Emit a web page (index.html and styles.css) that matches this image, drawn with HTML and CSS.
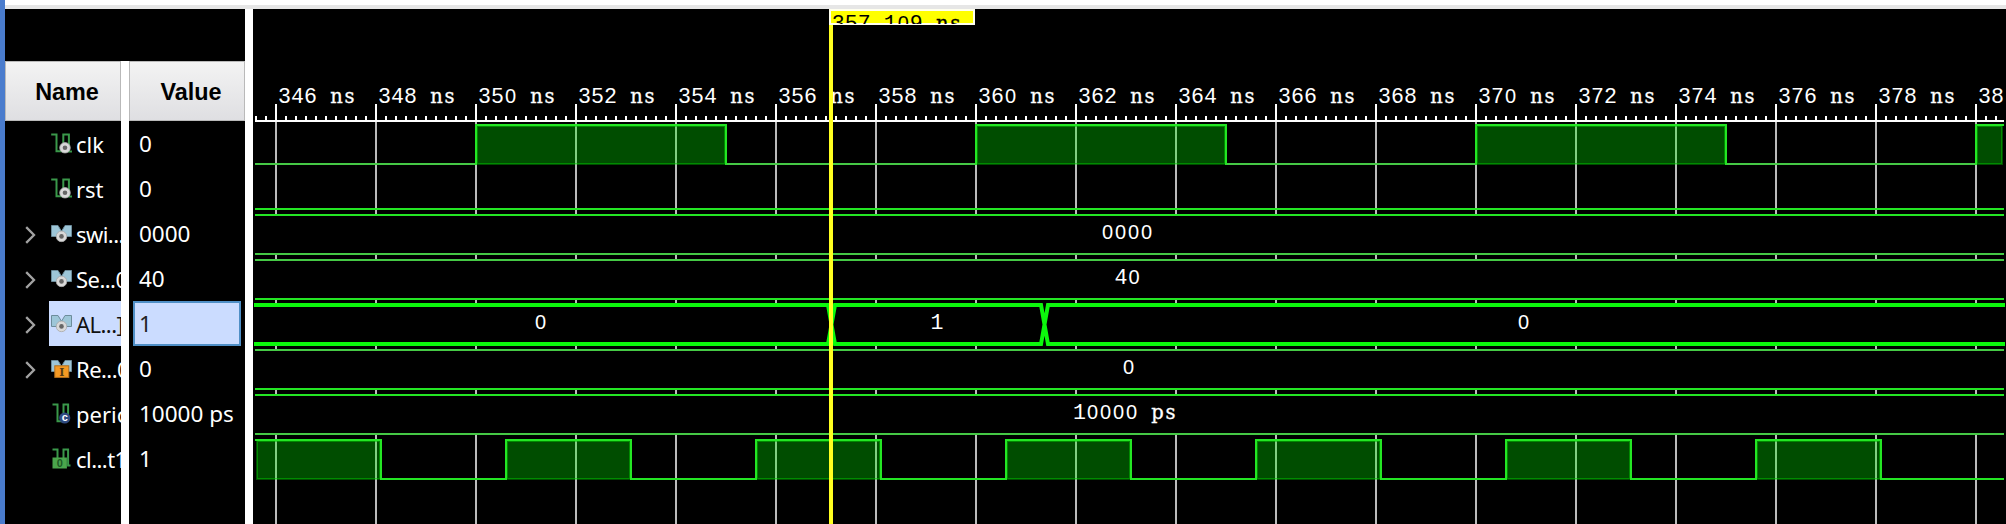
FILE: index.html
```html
<!DOCTYPE html>
<html lang="en">
<head>
<meta charset="utf-8">
<title>Waveform</title>
<link rel="stylesheet" href="styles.css">
</head>
<body>
<svg class="defs" aria-hidden="true">
  <symbol id="chevron" viewBox="0 0 12 20"><path d="M1.2 2.1L9 10 1.2 17.9" fill="none" stroke="#a2a2a2" stroke-width="2.3"/></symbol>
  <symbol id="scalar" viewBox="0 0 22 24">
    <path d="M1.2 1.5h5.3v16.8h6.8V1.5h5.6v17H22" fill="none" stroke="#3a984a" stroke-width="2"/>
  </symbol>
  <symbol id="probe" viewBox="0 0 12 12">
    <circle cx="6" cy="6" r="5.3" fill="#d9d9d9" stroke="#a8a8a8" stroke-width=".8"/><circle cx="6" cy="6" r="2.3" fill="#666"/>
  </symbol>
  <symbol id="bus" viewBox="0 0 22 24">
    <path d="M1.5 2.5H8l3.5 5.8L15 2.5h6.5v11h-20z" fill="#9dc6d8" stroke="#6d8c9b"/>
  </symbol>
</svg>
<div class="app">
  <div class="edge"></div>
  <div class="main">
    <div class="topbar"></div>
    <div class="panes">
      <div class="signals">
        <div class="blank"></div>
        <div class="columns">
          <div class="col">
            <div class="head">Name</div>
            <div class="row"><span class="tw"></span><div class="cell"><svg class="ico" viewBox="0 0 22 24"><use href="#scalar" width="22" height="24"/><use href="#probe" x="9" y="8.8" width="12" height="12"/></svg><span>clk</span></div></div>
            <div class="row"><span class="tw"></span><div class="cell"><svg class="ico" viewBox="0 0 22 24"><use href="#scalar" width="22" height="24"/><use href="#probe" x="9" y="8.8" width="12" height="12"/></svg><span>rst</span></div></div>
            <div class="row"><svg class="tw"><use href="#chevron" width="12" height="20"/></svg><div class="cell"><svg class="ico" viewBox="0 0 22 24"><use href="#bus" width="22" height="24"/><use href="#probe" x="5.5" y="7.4" width="12" height="12"/></svg><span class="short">swi...</span></div></div>
            <div class="row"><svg class="tw"><use href="#chevron" width="12" height="20"/></svg><div class="cell"><svg class="ico" viewBox="0 0 22 24"><use href="#bus" width="22" height="24"/><use href="#probe" x="5.5" y="7.4" width="12" height="12"/></svg><span class="short">Se...0</span></div></div>
            <div class="row"><svg class="tw"><use href="#chevron" width="12" height="20"/></svg><div class="cell selected"><svg class="ico" viewBox="0 0 22 24"><use href="#bus" width="22" height="24"/><use href="#probe" x="5.5" y="7.4" width="12" height="12"/></svg><span class="short">AL...]</span></div></div>
            <div class="row"><svg class="tw"><use href="#chevron" width="12" height="20"/></svg><div class="cell"><svg class="ico" viewBox="0 0 22 24"><use href="#bus" width="22" height="24"/><rect x="4.8" y="7.8" width="14" height="11.6" fill="#f59a23" stroke="#b36f1c"/><text class="glyph slab" x="11.8" y="17.6">I</text></svg><span class="short">Re...0</span></div></div>
            <div class="row"><span class="tw"></span><div class="cell"><svg class="ico" viewBox="0 0 22 24"><path d="M2.5 1.5h5v16.8h6V1.5h4.6v17" fill="none" stroke="#3a984a" stroke-width="2"/><circle cx="14.7" cy="15" r="5.6" fill="#2f4a80"/><text class="glyph light" x="14.7" y="18">c</text></svg><span>perio</span></div></div>
            <div class="row"><span class="tw"></span><div class="cell"><svg class="ico" viewBox="0 0 22 24"><path d="M2.5 1.5h5v16.8h6V1.5h4.6v16h2.4" fill="none" stroke="#3a984a" stroke-width="2"/><rect x="2.5" y="9.5" width="14.4" height="11" fill="#4aa64c"/><text class="glyph dark" x="9.7" y="18.8">0</text></svg><span class="short">cl...t1</span></div></div>
          </div>
          <div class="col">
            <div class="head">Value</div>
            <div class="row val">0</div>
            <div class="row val">0</div>
            <div class="row val">0000</div>
            <div class="row val">40</div>
            <div class="row val picked">1</div>
            <div class="row val">0</div>
            <div class="row val">10000 ps</div>
            <div class="row val">1</div>
          </div>
        </div>
      </div>
      <svg class="wave" id="wave" viewBox="253 9 1753 515" width="1753" height="515"></svg>
    </div>
  </div>
</div>
<script src="wave.js"></script>
</body>
</html>
```
FILE: styles.css
```css
* { box-sizing: border-box; }
body { margin: 0; background: #fff; overflow: hidden; font-family: "Noto Sans", "Open Sans", sans-serif; font-size: 22px; color: #fff; }
.defs { display: none; }
.app { display: flex; width: 2006px; height: 524px; }
.edge { flex: 0 0 5px; background: #4a7ccd; }
.main { flex: 1; min-width: 0; display: flex; flex-direction: column; }
.topbar { flex: 0 0 9px; border-bottom: 4px solid #e6e6e6; background: #fff; }
.panes { flex: 1; min-height: 0; display: flex; gap: 8px; }
.signals { flex: 0 0 240px; display: flex; flex-direction: column; }
.blank { flex: 0 0 52px; background: #000; }
.columns { flex: 1; display: grid; grid-template-columns: 116px 116px; gap: 8px; background: #fff; }
.col { background: #000; overflow: hidden; }
.head { height: 60px; padding-left: 8px; border: 1px solid #b9b9b9; background: linear-gradient(#f3f3f3, #dfdfe2); color: #000; font: bold 23.4px/61px "Liberation Sans", Arial, sans-serif; text-align: center; }
.row { display: flex; height: 45px; line-height: 46px; white-space: nowrap; }
.tw { flex: none; width: 12px; height: 20px; margin: 14px 12px 0 20px; }
.cell { flex: none; display: flex; width: 90px; padding-left: 1px; }
.selected { background: #cbdcff; color: #111; }
.short { letter-spacing: -.55px; }
.ico { flex: none; width: 22px; height: 24px; margin: 12px 4px 0 0; }
.glyph { font: bold 11px "Liberation Sans", Arial, sans-serif; text-anchor: middle; fill: #573b13; }
.slab { font-family: "DejaVu Serif", serif; }
.light { fill: #fff; }
.dark { fill: #1d5a24; }
.val { padding-left: 10px; font-size: 22.5px; }
.picked { margin: 0 4px; padding-left: 4px; border: 2px solid #4f8fc6; background: #cbdcff; color: #222; line-height: 42px; }

.wave { flex: none; display: block; background: #000; }
.ruler { fill: #fff; }
.grid { fill: #bbb; }
.line { fill: #24e624; }
.soft { fill: #45c945; }
.mask { fill: #000; }
.fill { fill: rgba(0, 255, 0, .3); }
.inner { fill: none; stroke: rgba(0, 200, 0, .5); stroke-width: 1; }
.cross { fill: none; stroke: #0cf80c; stroke-width: 4; }
.cursor { fill: #ffff20; }
.flag { fill: #ff0; stroke: #fffff0; stroke-width: 2; }
.txt { font: 21.6px "Liberation Mono", "Courier New", monospace; text-anchor: middle; fill: #fff; white-space: pre; }
.zero { font-family: "Liberation Sans", Arial, sans-serif; font-size: 20px; }
.unit { font-family: "DejaVu Serif", serif; font-size: 19.5px; stroke: #fff; stroke-width: .3px; }
.ink { fill: #000; }
.ink .unit { stroke: #000; }
```
FILE: wave.js
```javascript
const out = [];
const LEFT = 255, RIGHT = 2004, PITCH = 13;

const rect = (cls, x1, y1, x2, y2) =>
  out.push(`<rect class="${cls}" x="${x1}" y="${y1}" width="${x2 - x1}" height="${y2 - y1}"/>`);

// Fixed-pitch text: every character is centred in its own cell.
function label(str, firstCentre, baseline, extra = "") {
  const spans = [...str].map((c, i) => {
    const cls = c === "0" ? "zero" : /[a-z]/.test(c) ? "unit" : "digit";
    return `<tspan class="${cls}" x="${firstCentre + i * PITCH}">${c}</tspan>`;
  });
  out.push(`<text class="txt ${extra}" y="${baseline}">${spans.join("")}</text>`);
}

// Time grid
for (let x = 275; x < RIGHT; x += 100) rect("grid", x, 122, x + 2, 524);

// Clock-like signals: high intervals between rising and falling edges
function clock(top, bottom, pulses, cls, low) {
  let x = LEFT;
  for (const [rise, fall] of pulses) {
    if (rise > x) rect(low, x, bottom - 2, rise, bottom);
    const l = Math.max(rise, LEFT), r = Math.min(fall + 2, RIGHT);
    rect("fill", l + 1, top + 2, r - 1, bottom);
    out.push(`<rect class="inner" x="${l + 2.5}" y="${top + 2.5}" width="${r - l - 5}" height="${bottom - top - 4}"/>`);
    rect(cls, l, top, r, top + 2);
    if (rise >= LEFT) rect(cls, rise, top, rise + 2, bottom);
    if (fall < RIGHT) rect(cls, fall, top, fall + 2, bottom);
    x = r;
  }
  if (x < RIGHT) rect(low, x, bottom - 2, RIGHT, bottom);
}
clock(124, 165, [[475, 725], [975, 1225], [1475, 1725], [1975, 2100]], "line", "soft");
rect("line", LEFT, 208, RIGHT, 210);
clock(439, 480, [[200, 380], [505, 630], [755, 880], [1005, 1130], [1255, 1380], [1505, 1630], [1755, 1880]], "line", "line");

// Buses
function bus(top, bottom, a, b) {
  rect("mask", LEFT, top, RIGHT, bottom);
  rect(a, LEFT, top, RIGHT, top + 2);
  rect(b, LEFT, bottom - 2, RIGHT, bottom);
}
bus(214, 255, "line", "soft");
bus(259, 300, "soft", "line");
bus(349, 390, "soft", "line");
bus(394, 435, "line", "soft");
rect("mask", 254, 303, 2005, 346);
out.push('<path class="cross" d="M254 305H828L835 344H1041L1048 305H2005M254 344H828L835 305H1041L1048 344H2005"/>');

label("0000", 1107.5, 239);
label("40", 1121, 284);
label("0", 540.5, 329);
label("1", 937, 329);
label("0", 1523.5, 329);
label("0", 1128.5, 374);
label("10000 ps", 1079.5, 419);

// Ruler
rect("ruler", LEFT, 120, RIGHT, 122);
for (let x = 255; x < RIGHT; x += 10) rect("ruler", x, (x - 275) % 100 ? 116 : 104, x + 2, 120);
for (let i = 0; i < 18; i++) label(i < 17 ? `${346 + 2 * i} ns` : "38", 284.5 + 100 * i, 103);

// Cursor
rect("cursor", 829, 25, 833, 524);
out.push('<rect class="flag" x="830" y="10" width="144" height="14"/>');
out.push('<clipPath id="flagClip"><rect x="829" y="9" width="146" height="15"/></clipPath><g clip-path="url(#flagClip)">');
label("357.109 ns", 838.3, 29.5, "ink");
out.push("</g>");

document.getElementById("wave").innerHTML = out.join("");
```
